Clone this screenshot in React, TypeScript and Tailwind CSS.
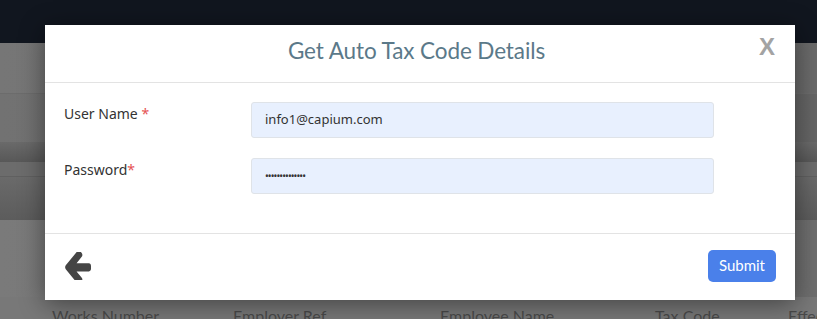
export default function App() {
  return (
    <div className="relative w-[817px] h-[319px] overflow-hidden bg-[#747474] font-['Noto_Sans',sans-serif]">
      {/* page behind the overlay */}
      <div className="h-[43px] bg-[#11161f]"></div>
      <div className="h-[51px] bg-gradient-to-r from-[#767676] to-[#6a6a6a] border-b border-[#6c6c6c]"></div>
      <div className="h-[48px] bg-gradient-to-r from-[#727272] to-[#656565]"></div>
      <div className="h-[20px] bg-gradient-to-b from-[#6a6a6a] to-[#585858]"></div>
      <div className="h-[15px] bg-[#6c6c6c] border-b border-[#606060]"></div>
      <div className="h-[43px] bg-gradient-to-b from-[#6a6a6a] to-[#5c5c5c]"></div>
      <div className="h-[77px] bg-gradient-to-r from-[#7a7a7a] to-[#6e6e6e]"></div>
      <div className="flex h-[22px] bg-[#787878] pt-[11px] text-[16px] text-[#4a4a4a] leading-none font-['Lato',sans-serif] whitespace-nowrap">
        <span className="ml-[52px] w-[181px] shrink-0">Works Number</span>
        <span className="w-[207px] shrink-0">Employer Ref</span>
        <span className="w-[215px] shrink-0">Employee Name</span>
        <span className="w-[133px] shrink-0">Tax Code</span>
        <span className="shrink-0">Effective</span>
      </div>

      {/* modal */}
      <div className="absolute left-[45px] top-[25px] w-[750px] h-[275px] bg-white shadow-[0_4px_24px_rgba(0,0,0,0.45)] flex flex-col">
        <div className="relative h-[58px] border-b border-[#e3e3e3] flex items-center justify-center pb-[6px] pr-[7px]">
          <h2 className="text-[22.5px] text-[#5b7989] font-['Lato',sans-serif] tracking-[-0.1px]">Get Auto Tax Code Details</h2>
          <span className="absolute right-[20px] top-[4px] text-[24px] font-bold text-[#a3a3a3] font-['Liberation_Sans',sans-serif]">X</span>
        </div>
        <div className="h-[150px] pl-[19px] pt-[19px] flex flex-col gap-[20px] text-[14px] text-[#333]">
          <div className="flex">
            <label className="w-[187px] pt-[1px]">User Name <span className="text-[#e55353]">*</span></label>
            <div className="w-[463px] h-[36px] rounded-[3px] border border-[#dfe3e8] bg-[#e8f0fe] px-[13px] flex items-center text-[13px]">info1@capium.com</div>
          </div>
          <div className="flex">
            <label className="w-[187px] pt-[1px]">Password<span className="text-[#e55353]">*</span></label>
            <div className="w-[463px] h-[36px] rounded-[3px] border border-[#dfe3e8] bg-[#e8f0fe] px-[13px] flex items-center text-[10px] tracking-[-0.9px]">••••••••••••••</div>
          </div>
        </div>
        <div className="flex-1 border-t border-[#e3e3e3] flex items-center justify-between px-[19px] pb-[3px]">
          <svg width="27" height="28" viewBox="128 250 1536 1300" preserveAspectRatio="none" className="text-[#454545]">
            <path fill="currentColor" d="M1664 896v128q0 53-32.5 90.5t-84.5 37.5h-704l293 294q38 36 38 90t-38 90l-75 76q-37 37-90 37-52 0-91-37l-651-652q-37-37-37-90 0-52 37-91l651-650q38-38 91-38 52 0 90 38l75 74q38 38 38 91t-38 91l-293 293h704q52 0 84.5 37.5t32.5 90.5z" />
          </svg>
          <button className="h-[32px] px-[11px] rounded-[5px] bg-[#4a80ea] text-white text-[15px] font-['Lato',sans-serif]">Submit</button>
        </div>
      </div>
    </div>
  )
}
